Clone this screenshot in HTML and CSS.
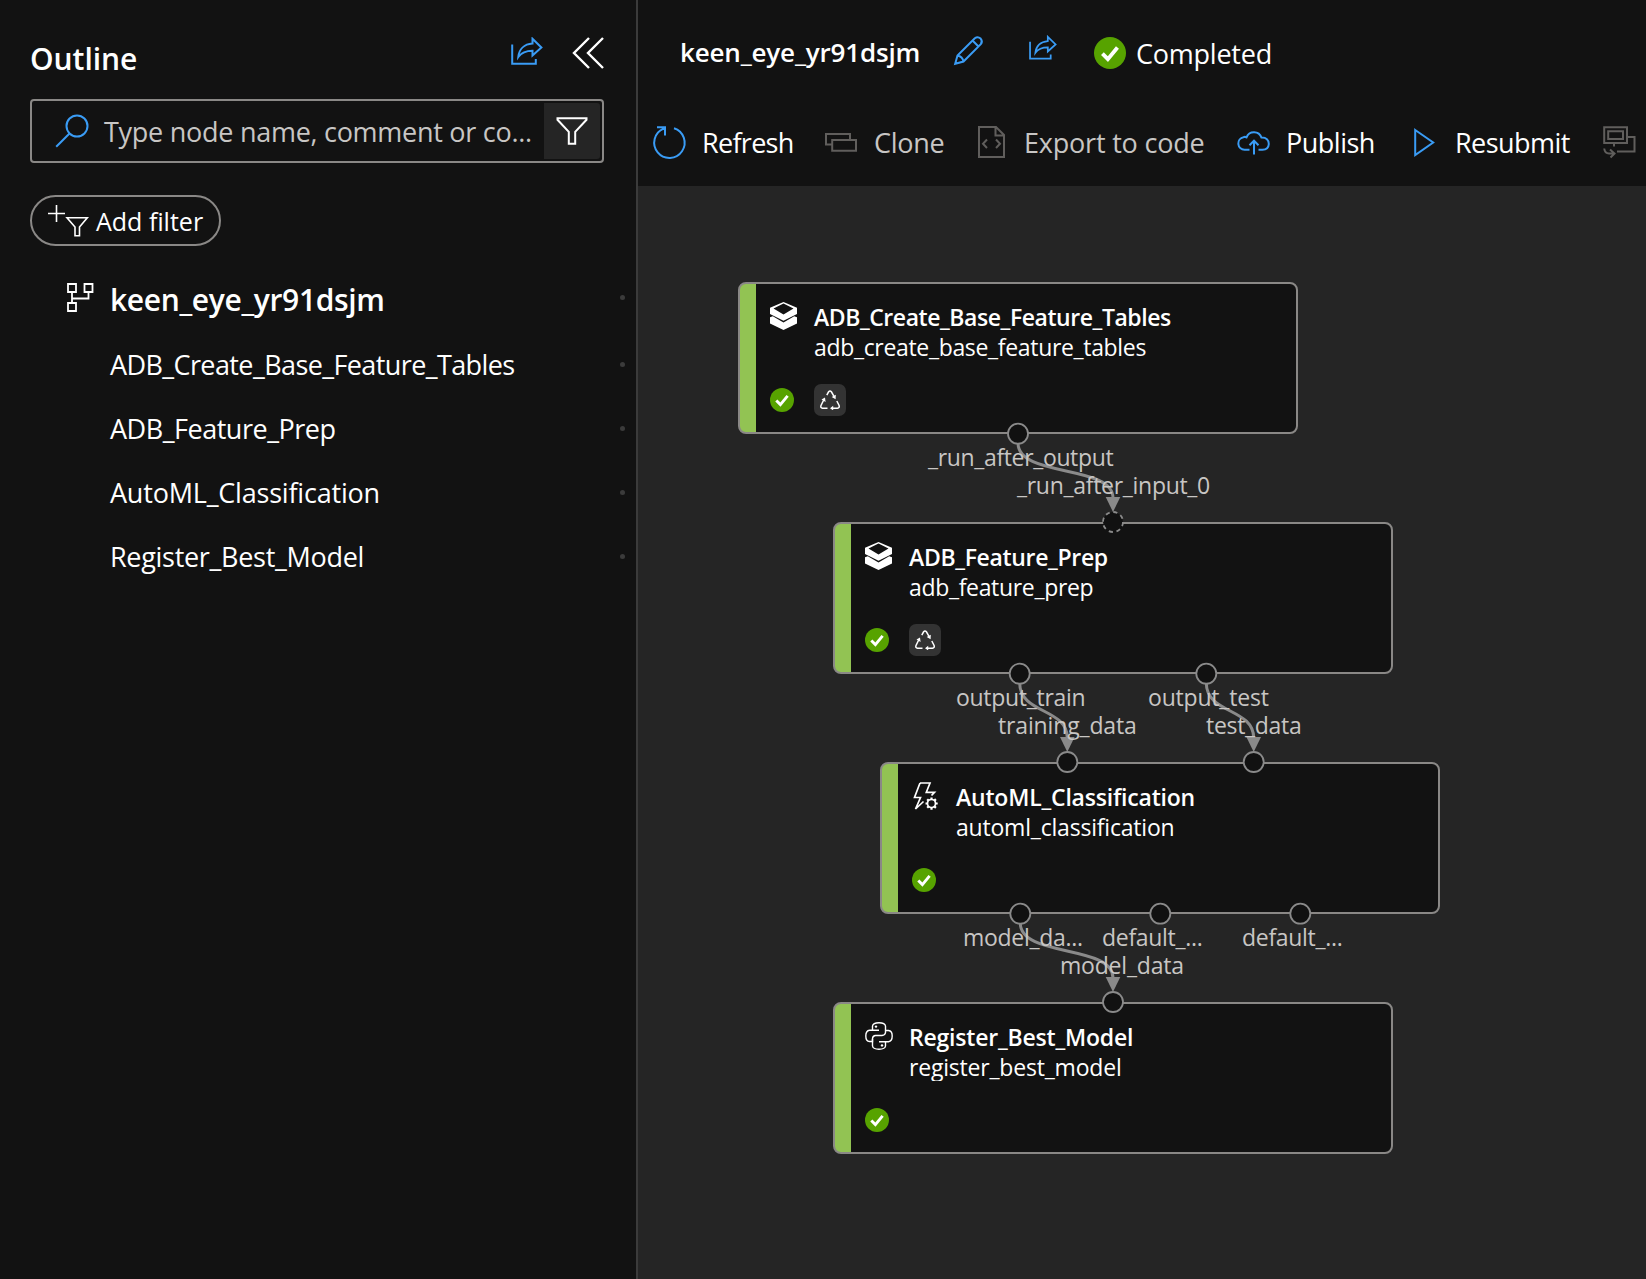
FILE: index.html
```html
<!DOCTYPE html>
<html lang="en">
<head>
<meta charset="utf-8">
<title>keen_eye_yr91dsjm</title>
<link rel="stylesheet" href="styles.css">
</head>
<body>
<svg width="0" height="0" class="defs">
  <defs>
    <symbol id="share" viewBox="0 0 32 28">
      <path d="M1.2 7.500v19.300h23.600V22" /><path d="M21.500 1.800 30.400 10.500l-8.900 8v-4.700C15 13.800 10.500 15.500 7.300 20 8 12.500 13 7.200 21.500 6.600z"/>
    </symbol>
    <symbol id="check" viewBox="0 0 24 24">
      <circle cx="12" cy="12" r="12" fill="#57a300"/><path d="M6.300 12.400 10.400 16.600 17.600 7.900" fill="none" stroke="#fff" stroke-width="2.900"/>
    </symbol>
    <symbol id="funnel" viewBox="0 0 32 28">
      <path d="M1.500 1.200h29v1.600L19.200 14.800V26.800h-6.400V14.800L1.500 2.800z"/>
    </symbol>
    <symbol id="layers" viewBox="0 0 27 28">
      <path d="M13.500 0 27 5.800V12L13.500 18.700 0 12V5.800zM13.500 1.600 3.500 6.400 13.500 12.400 23.500 6.400z" fill="#fff" fill-rule="evenodd"/>
      <path d="M0 15.200 2.800 14.300 13.500 20.600 24.200 14.300 27 15.200V21.600L13.500 28 0 21.600z" fill="#fff"/>
    </symbol>
    <symbol id="recycle" viewBox="0 0 20 20">
      <path d="M6.800 5.200 8.600 1.800Q10 .2 11.400 1.800L14 6.300M16.800 11l2.300 4.500Q19.800 18 17.500 18.200H12M7.500 18.200H2.500Q.2 18 1 15.500L3.700 10" fill="none" stroke="#fff" stroke-width="1.500"/>
      <path d="M15.600 9.200 11.700 6.900 15.800 4.700zM10 18.200 13.200 15.800V20.400zM5 7.500 5.600 12 1.500 9.600z" fill="#fff"/>
    </symbol>
  </defs>
</svg>
<div class="app">
  <aside class="outline">
    <header class="outline-head">
      <h2>Outline</h2>
      <svg class="line-icon blue outline-share" width="32" height="28"><use href="#share"/></svg>
      <svg class="line-icon white collapse" width="32" height="32" viewBox="0 0 32 32"><path d="M17 1 2 16l15 15M31 1 16 16l15 15"/></svg>
    </header>
    <div class="search">
      <svg class="line-icon blue" width="34" height="34" viewBox="0 0 34 34"><circle cx="22" cy="12" r="10.500"/><path d="M14.500 19.500 1.200 32.800"/></svg>
      <span class="placeholder">Type node name, comment or co...</span>
      <span class="filter-btn"><svg class="line-icon white" width="32" height="28"><use href="#funnel"/></svg></span>
    </div>
    <div class="add-filter">
      <svg class="line-icon white" width="40" height="33" viewBox="0 0 40 33"><path d="M0 9.500H17M8.500 1v17" stroke-width="1.600"/><path d="M19 13.800H39.300L31.500 23V31.800H27V23z" stroke-width="1.600"/></svg>
      <span>Add filter</span>
    </div>
    <ul class="tree">
      <li class="root"><svg class="line-icon white" width="27" height="29" viewBox="0 0 27 29"><path d="M1 1h8v8H1zM17.500 1h8v8h-8zM1 20h8v8H1zM5 9v11M5 15.500H21.500V9" stroke-width="1.800"/></svg><span>keen_eye_yr91dsjm</span><i></i></li>
      <li><span class="t-create">ADB_Create_Base_Feature_Tables</span><i></i></li>
      <li><span class="t-prep">ADB_Feature_Prep</span><i></i></li>
      <li><span class="t-automl">AutoML_Classification</span><i></i></li>
      <li><span class="t-register">Register_Best_Model</span><i></i></li>
    </ul>
  </aside>
  <main class="main">
    <div class="title-row">
      <h1>keen_eye_yr91dsjm</h1>
      <svg class="line-icon blue pencil" width="29" height="29" viewBox="0 0 29 29"><path d="M1.200 27.800 3.500 19.500 20.800 2.200Q23.800 0 26.600 2.500 29 5.500 26.800 8.200L9.500 25.500zM18.500 4.500 24.500 10.500M3.500 19.500Q8.500 20.500 9.500 25.500"/></svg>
      <svg class="line-icon blue title-share" width="28" height="25"><use href="#share"/></svg>
      <svg class="done" width="32" height="32"><use href="#check"/></svg>
      <span class="status">Completed</span>
    </div>
    <div class="toolbar">
      <svg class="line-icon blue i-refresh" width="33" height="33" viewBox="0 0 33 33"><path d="M21 2.200A15.200 15.200 0 1 1 10.500 2.700M4 1.200H12V9.500M12 1.500 10 3.500"/></svg>
      <span class="c-refresh">Refresh</span>
      <svg class="line-icon grey i-clone" width="32" height="19" viewBox="0 0 32 19"><path d="M7 11.500H1V1H25V7M7.200 7H31V17.800H7.200z"/></svg>
      <span class="dim c-clone">Clone</span>
      <svg class="line-icon grey i-export" width="27" height="32" viewBox="0 0 27 32"><path d="M1 1H18L26 9V31H1zM17.500 1V9.500H26M9 13.500 5 17.800 9 22M18 13.500 22 17.800 18 22"/></svg>
      <span class="dim c-export">Export to code</span>
      <svg class="line-icon blue i-cloud" width="33" height="25" viewBox="0 0 33 25"><path d="M12.500 19.700H7.500A6.300 6.300 0 0 1 6.500 7.200Q8 6.500 9.500 7.300A8 8 0 0 1 24.500 7.600Q31.800 7.500 31.800 14 31.500 19.700 25.500 19.700H21.500M17 24.500V11M12.500 15.200 17 10.700 21.500 15.200"/></svg>
      <span class="c-publish">Publish</span>
      <svg class="line-icon blue i-play" width="21" height="29" viewBox="0 0 21 29"><path d="M1.200 2 19.200 14.500 1.200 27z"/></svg>
      <span class="c-resubmit">Resubmit</span>
      <svg class="line-icon grey i-last" width="33" height="33" viewBox="0 0 33 33"><path d="M1.200 1.200H24V17H1.200zM5.200 5.200H20V13H5.200zM24 11H31.500V25.500H14M11 17V20.500M1.200 22.500Q1.800 27.500 6 27.500H11M7 23.500 11.500 27.500 7.500 31.500"/></svg>
    </div>
    <section class="canvas">
      <svg class="edges" width="1008" height="1093" viewBox="638 186 1008 1093">
        <g fill="none" stroke="#8a8a8a" stroke-width="3">
          <path d="M1018 443C1018 478 1113 464 1113 498"/>
          <path d="M1019.700 683C1019.700 714 1067.300 708 1067.300 738"/>
          <path d="M1206.300 683C1206.300 714 1253.700 708 1253.700 738"/>
          <path d="M1020.300 923C1020.300 958 1113 944 1113 978"/>
        </g>
        <g fill="#8a8a8a">
          <path d="M1105.700 497h14.600l-7.300 15z"/><path d="M1060 737h14.600l-7.300 15z"/><path d="M1246.400 737h14.600l-7.300 15z"/><path d="M1105.700 977h14.600l-7.300 15z"/>
        </g>
      </svg>
      <article class="node n1">
        <svg class="kind" width="27" height="28"><use href="#layers"/></svg>
        <div class="names"><strong>ADB_Create_Base_Feature_Tables</strong><span>adb_create_base_feature_tables</span></div>
        <div class="badges"><svg width="24" height="24"><use href="#check"/></svg><b><svg width="20" height="20"><use href="#recycle"/></svg></b></div>
      </article>
      <article class="node n2">
        <svg class="kind" width="27" height="28"><use href="#layers"/></svg>
        <div class="names"><strong>ADB_Feature_Prep</strong><span>adb_feature_prep</span></div>
        <div class="badges"><svg width="24" height="24"><use href="#check"/></svg><b><svg width="20" height="20"><use href="#recycle"/></svg></b></div>
      </article>
      <article class="node n3">
        <svg class="kind line-icon white" width="27" height="28" viewBox="0 0 27 28"><g stroke-width="1.700"><path d="M8 1H18L14.300 10.300H22.500L19.500 13.500M8 1 2.500 15.500H8.500L3.500 27 11.500 19.500"/><circle cx="19.500" cy="21.500" r="4"/><path d="M19.500 15.500v2M19.500 25.500v2.200M13.500 21.500h2M23.500 21.500h2.200M15.200 17.200l1.400 1.400M22.400 24.400l1.500 1.500M15.200 25.800l1.400-1.400M22.400 18.600l1.500-1.500" stroke-width="2.200"/></g></svg>
        <div class="names"><strong>AutoML_Classification</strong><span>automl_classification</span></div>
        <div class="badges"><svg width="24" height="24"><use href="#check"/></svg></div>
      </article>
      <article class="node n4">
        <svg class="kind line-icon white" width="28" height="28" viewBox="0 0 28 28"><g stroke-width="1.400"><path d="M14 8.300H4.500Q.8 8.800.8 14T4.500 19.500H7.500V16.500Q7.800 13.600 10.500 13.500H17Q20.200 13.300 20.500 10.500V4Q20 .8 14 .8T7.500 4V8.300"/><path d="M14 19.700H23.500Q27.200 19.200 27.200 14T23.500 8.500H20.500M7.500 17V24Q8 27.200 14 27.200T20.500 24V19.700"/></g><circle cx="11" cy="4.600" r="1.200" fill="#fff" stroke="none"/><circle cx="17" cy="23.400" r="1.200" fill="#fff" stroke="none"/></svg>
        <div class="names"><strong>Register_Best_Model</strong><span>register_best_model</span></div>
        <div class="badges"><svg width="24" height="24"><use href="#check"/></svg></div>
      </article>
      <svg class="ports" width="1008" height="1093" viewBox="638 186 1008 1093">
        <g fill="#111" stroke="#8a8a8a" stroke-width="1.800">
          <circle cx="1018" cy="433.700" r="10"/>
          <circle cx="1113" cy="522" r="10" stroke-dasharray="4.200 3.650"/>
          <circle cx="1019.700" cy="673.700" r="10"/><circle cx="1206.300" cy="673.700" r="10"/>
          <circle cx="1067.300" cy="762" r="10"/><circle cx="1253.700" cy="762" r="10"/>
          <circle cx="1020.300" cy="913.700" r="10"/><circle cx="1160.300" cy="913.700" r="10"/><circle cx="1300.300" cy="913.700" r="10"/>
          <circle cx="1113" cy="1002" r="10"/>
        </g>
      </svg>
      <span class="port-label l1">_run_after_output</span>
      <span class="port-label l2">_run_after_input_0</span>
      <span class="port-label l3">output_train</span>
      <span class="port-label l4">output_test</span>
      <span class="port-label l5">training_data</span>
      <span class="port-label l6">test_data</span>
      <span class="port-label l7">model_da...</span>
      <span class="port-label l8">default_...</span>
      <span class="port-label l9">default_...</span>
      <span class="port-label l10">model_data</span>
    </section>
  </main>
</div>
</body>
</html>
```

FILE: styles.css
```css
* { box-sizing: border-box; }
body { margin: 0; background: #121212; color: #fff; font-family: "Open Sans", "Noto Sans", sans-serif; font-size: 27px; letter-spacing: -0.7px; white-space: nowrap; overflow: hidden; }
h1, h2, ul { margin: 0; padding: 0; }
svg { flex: none; display: block; }
.defs { position: absolute; }
.line-icon { fill: none; stroke-width: 2; overflow: visible; }
.blue { stroke: #3a9cf5; }
.white { stroke: #fff; }
.grey { stroke: #605e5c; }
.app { display: flex; width: 1646px; height: 1279px; }

.outline { width: 638px; flex: none; border-right: 2px solid #3b3b3b; padding-left: 30px; }
.outline-head { display: flex; align-items: center; height: 99px; padding-top: 17px; }
.outline-head h2 { font-size: 30px; font-weight: 600; letter-spacing: -0.05px; width: 481px; }
.outline-share { margin-top: -15px; }
.collapse { margin: -11px 0 0 29px; stroke-width: 2.4; }
.search { display: flex; align-items: center; width: 574px; height: 64px; border: 2px solid #8a8886; border-radius: 4px; padding: 0 2px 0 23px; }
.placeholder { color: #c8c6c4; margin-left: 15px; width: 440px; letter-spacing: -0.27px; }
.filter-btn { display: flex; align-items: center; justify-content: center; width: 56px; height: 56px; background: #252525; border-radius: 0 3px 3px 0; }
.add-filter { display: flex; align-items: center; width: 191px; height: 51px; margin-top: 32px; padding-left: 16px; border: 2px solid #8a8886; border-radius: 26px; font-size: 25px; letter-spacing: 0; gap: 8px; }
.tree { list-style: none; margin-top: 22px; }
.tree li { display: flex; align-items: center; height: 64px; padding: 0 11px 0 80px; }
.tree i { width: 5px; height: 5px; border-radius: 50%; background: #3b3b3b; margin-left: auto; }
.tree .root { font-size: 30px; font-weight: 600; letter-spacing: -0.35px; padding-left: 37px; padding-bottom: 2px; gap: 16px; }
.tree .root svg, .tree .root i { margin-top: -4px; }
.t-create { letter-spacing: -0.6px; }
.t-prep { letter-spacing: -0.48px; }
.t-automl { letter-spacing: -0.2px; }
.t-register { letter-spacing: -0.3px; }

.main { flex: 1; min-width: 0; display: flex; flex-direction: column; }
.title-row { display: flex; align-items: center; height: 104px; padding-left: 42px; }
h1 { font-size: 26px; font-weight: 600; letter-spacing: -0.17px; width: 274px; margin-top: -1px; }
.pencil { margin-top: -4px; }
.title-share { margin: -9px 0 0 46px; }
.done { margin: 2px 0 0 37px; }
.status { margin: 2px 0 0 10px; letter-spacing: -0.23px; }
.toolbar { display: flex; align-items: center; height: 82px; padding: 0 0 6px 15px; }
.toolbar span { margin-left: 17px; }
.dim { color: #c8c6c4; }
.toolbar .c-refresh { margin-left: 16px; width: 123px; }
.toolbar .c-clone { width: 104px; letter-spacing: -0.3px; }
.toolbar .c-export { margin-left: 19px; width: 213px; letter-spacing: -0.2px; }
.toolbar .c-publish { margin-left: 16px; width: 128px; letter-spacing: -0.5px; }
.toolbar .c-resubmit { margin-left: 20px; width: 148px; letter-spacing: -0.55px; }

.canvas { position: relative; flex: 1; background: #252525; }
.edges, .ports { position: absolute; left: 0; top: 0; }
.node { position: absolute; width: 560px; height: 152px; background: #121212 linear-gradient(90deg, #92c353 16px, #121212 16px); border: 2px solid #8a8886; border-radius: 8px; display: grid; grid-template-columns: 44px 1fr; grid-template-rows: 82px 32px; padding: 18px 0 0 30px; font-size: 23px; letter-spacing: -0.4px; }
.n1 { left: 100px; top: 96px; }
.n2 { left: 195px; top: 336px; }
.n3 { left: 242px; top: 576px; }
.n4 { left: 195px; top: 816px; }
.names { display: flex; flex-direction: column; line-height: 30px; }
.names strong { font-weight: 600; }
.names span { height: 29px; overflow: hidden; }
.n1 strong { letter-spacing: -0.44px; }
.n1 .names span { letter-spacing: -0.33px; }
.n2 .names { letter-spacing: -0.33px; }
.n3 .names { letter-spacing: -0.2px; }
.n4 .names { letter-spacing: -0.2px; }
.badges { grid-column: 1 / 3; display: flex; align-items: center; gap: 20px; }
.badges b { width: 32px; height: 32px; border-radius: 7px; background: #333; display: flex; align-items: center; justify-content: center; }
.port-label { position: absolute; font-size: 23px; line-height: 28px; letter-spacing: -0.3px; color: #c8c6c4; }
.l1 { left: 290px; top: 257px; letter-spacing: -0.36px; }
.l2 { left: 379px; top: 285px; }
.l3 { left: 318px; top: 497px; }
.l4 { left: 510px; top: 497px; letter-spacing: -0.2px; }
.l5 { left: 360px; top: 525px; letter-spacing: -0.15px; }
.l6 { left: 568px; top: 525px; }
.l7 { left: 325px; top: 737px; }
.l8 { left: 464px; top: 737px; }
.l9 { left: 604px; top: 737px; }
.l10 { left: 422px; top: 765px; letter-spacing: -0.2px; }
```
